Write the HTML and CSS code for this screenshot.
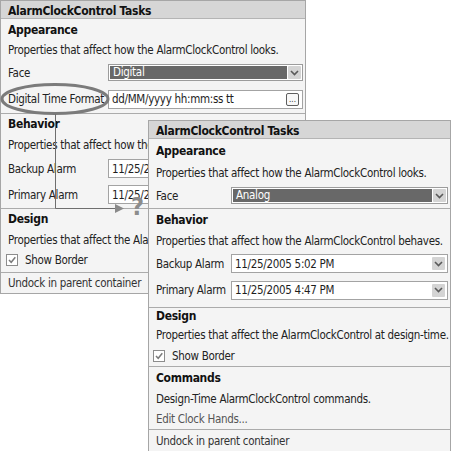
FILE: index.html
```html
<!DOCTYPE html>
<html>
<head>
<meta charset="utf-8">
<link rel="stylesheet" href="styles.css">
</head>
<body>
<div class="stage">
  <section class="panel p1">
    <div class="title">AlarmClockControl Tasks</div>
    <div class="head h21">Appearance</div>
    <div class="desc h20">Properties that affect how the AlarmClockControl looks.</div>
    <div class="row h25"><span class="lbl">Face</span>
      <div class="combo"><span class="val">Digital</span><span class="dd"><svg width="9" height="6" viewBox="0 0 9 6"><path d="M1 1 L4.5 4.5 L8 1" fill="none" stroke="#5a5a5a" stroke-width="1.6"/></svg></span></div>
    </div>
    <div class="row h28"><span class="lbl">Digital Time Format</span>
      <div class="field"><span class="txt">dd/MM/yyyy hh:mm:ss tt</span><span class="ell">...</span></div>
    </div>
    <div class="sep"></div>
    <div class="head h20">Behavior</div>
    <div class="desc h22">Properties that affect how the AlarmClockControl behaves.</div>
    <div class="row h25"><span class="lbl">Backup Alarm</span>
      <div class="field"><span class="txt">11/25/2005 5:02 PM</span></div>
    </div>
    <div class="row h27"><span class="lbl">Primary Alarm</span>
      <div class="field"><span class="txt">11/25/2005 4:47 PM</span></div>
    </div>
    <div class="sep"></div>
    <div class="head h20">Design</div>
    <div class="desc h21">Properties that affect the AlarmClockControl at design-time.</div>
    <div class="check h19"><span class="box"><svg width="10" height="10" viewBox="0 0 10 10"><path d="M2 5 L4.2 7.3 L8.3 2.3" fill="none" stroke="#7a7a7a" stroke-width="1.5"/></svg></span>Show Border</div>
    <div class="gap3"></div>
    <div class="sep"></div>
    <div class="desc h20 plain">Undock in parent container</div>
  </section>

  <svg class="overlay" width="451" height="451" viewBox="0 0 451 451">
    <ellipse cx="55" cy="99" rx="53" ry="14.5" fill="none" stroke="#7b7b7b" stroke-width="3"/>
    <path d="M55.5 114 V208.5 H117" fill="none" stroke="#6e6e6e" stroke-width="1"/>
    <path d="M115 204 L124 208.5 L115 213 Z" fill="#8a8a8a"/>
    <text x="131" y="215" class="qmark">?</text>
  </svg>

  <section class="panel p2">
    <div class="title">AlarmClockControl Tasks</div>
    <div class="head h23">Appearance</div>
    <div class="desc h21">Properties that affect how the AlarmClockControl looks.</div>
    <div class="row h25"><span class="lbl">Face</span>
      <div class="combo"><span class="val">Analog</span><span class="dd"><svg width="9" height="6" viewBox="0 0 9 6"><path d="M1 1 L4.5 4.5 L8 1" fill="none" stroke="#5a5a5a" stroke-width="1.6"/></svg></span></div>
    </div>
    <div class="sep"></div>
    <div class="head h22">Behavior</div>
    <div class="desc h20">Properties that affect how the AlarmClockControl behaves.</div>
    <div class="row h25"><span class="lbl">Backup Alarm</span>
      <div class="field"><span class="txt">11/25/2005 5:02 PM</span><span class="dd"><svg width="9" height="6" viewBox="0 0 9 6"><path d="M1 1 L4.5 4.5 L8 1" fill="none" stroke="#5a5a5a" stroke-width="1.6"/></svg></span></div>
    </div>
    <div class="row h28"><span class="lbl">Primary Alarm</span>
      <div class="field"><span class="txt">11/25/2005 4:47 PM</span><span class="dd"><svg width="9" height="6" viewBox="0 0 9 6"><path d="M1 1 L4.5 4.5 L8 1" fill="none" stroke="#5a5a5a" stroke-width="1.6"/></svg></span></div>
    </div>
    <div class="gap3"></div>
    <div class="sep"></div>
    <div class="head h16">Design</div>
    <div class="desc h22">Properties that affect the AlarmClockControl at design-time.</div>
    <div class="check h19"><span class="box"><svg width="10" height="10" viewBox="0 0 10 10"><path d="M2 5 L4.2 7.3 L8.3 2.3" fill="none" stroke="#7a7a7a" stroke-width="1.5"/></svg></span>Show Border</div>
    <div class="gap1"></div>
    <div class="sep"></div>
    <div class="head h22">Commands</div>
    <div class="desc h20">Design-Time AlarmClockControl commands.</div>
    <div class="desc h20 link">Edit Clock Hands...</div>
    <div class="sep"></div>
    <div class="desc h22 plain">Undock in parent container</div>
  </section>
</div>
</body>
</html>
```

FILE: styles.css
```css
html, body {
  margin: 0;
  padding: 0;
  background: #ffffff;
}
body {
  width: 451px;
  height: 451px;
  overflow: hidden;
}
.stage {
  position: relative;
  width: 451px;
  height: 451px;
}
.panel {
  position: absolute;
  box-sizing: border-box;
  border: 1px solid #a6a6a6;
  background: #f4f4f4;
  font-family: "DejaVu Sans Condensed", "DejaVu Sans", sans-serif;
  font-size: 11.5px;
  letter-spacing: -0.3px;
  color: #222222;
  overflow: hidden;
}
.p1 {
  left: 0;
  top: 0;
  width: 306px;
  z-index: 1;
  --lbl: 100px;
}
.p2 {
  left: 148px;
  top: 120px;
  width: 303px;
  height: 340px;
  z-index: 3;
  --lbl: 75px;
}
.overlay {
  position: absolute;
  left: 0;
  top: 0;
  z-index: 2;
}
.qmark {
  font-family: "DejaVu Sans Condensed", "DejaVu Sans", sans-serif;
  font-weight: bold;
  font-size: 25px;
  fill: #8c8c8c;
}
.title {
  background: #d6d6d6;
  border-bottom: 1px solid #b4b4b4;
  padding: 3px 7px 0;
  height: 14px;
  line-height: 14px;
  font-weight: bold;
  font-size: 12px;
  color: #111111;
  white-space: nowrap;
}
.head, .desc, .row, .check {
  display: flex;
  align-items: center;
  padding: 0 2px 0 7px;
  white-space: nowrap;
}
.head {
  font-weight: bold;
  font-size: 12px;
  color: #111111;
}
.link { color: #555555; }
.plain { color: #333333; }
.h16 { height: 16px; }
.h19 { height: 19px; }
.h20 { height: 20px; }
.h21 { height: 21px; }
.h22 { height: 22px; }
.h23 { height: 23px; }
.h25 { height: 25px; }
.h27 { height: 27px; }
.h28 { height: 28px; }
.gap1 { height: 1px; }
.gap3 { height: 3px; }
.sep {
  height: 1px;
  background: #ababab;
}
.lbl {
  width: var(--lbl);
  flex: none;
}
.combo {
  flex: 1;
  min-width: 0;
  height: 17px;
  box-sizing: border-box;
  border: 1px solid #9c9c9c;
  background: #ffffff;
  padding: 1px;
  display: flex;
  gap: 1px;
}
.combo .val {
  flex: 1;
  background: #686868;
  color: #ffffff;
  padding-left: 3px;
  line-height: 13px;
}
.dd {
  flex: none;
  width: 13px;
  height: 13px;
  background: #d4d4d4;
  border-radius: 1px;
  display: flex;
  align-items: center;
  justify-content: center;
}
.field {
  flex: 1;
  min-width: 0;
  height: 19px;
  box-sizing: border-box;
  border: 1px solid #a3a3a3;
  background: #ffffff;
  padding: 0 2px 0 3px;
  display: flex;
  align-items: center;
  color: #1e1e1e;
}
.txt {
  flex: 1;
  overflow: hidden;
}
.ell {
  flex: none;
  width: 13px;
  height: 13px;
  box-sizing: border-box;
  border: 1px solid #5e5e5e;
  border-radius: 2px;
  background: #f8f8f8;
  font-size: 8px;
  letter-spacing: 0;
  line-height: 12px;
  text-align: center;
  color: #333;
  margin-right: 1px;
}
.check {
  padding-left: 5px;
}
.p2 .check {
  padding-left: 4px;
}
.box {
  flex: none;
  width: 12px;
  height: 12px;
  box-sizing: border-box;
  border: 1px solid #8c8c8c;
  background: #ffffff;
  margin-right: 7px;
  display: flex;
  align-items: center;
  justify-content: center;
}
```
